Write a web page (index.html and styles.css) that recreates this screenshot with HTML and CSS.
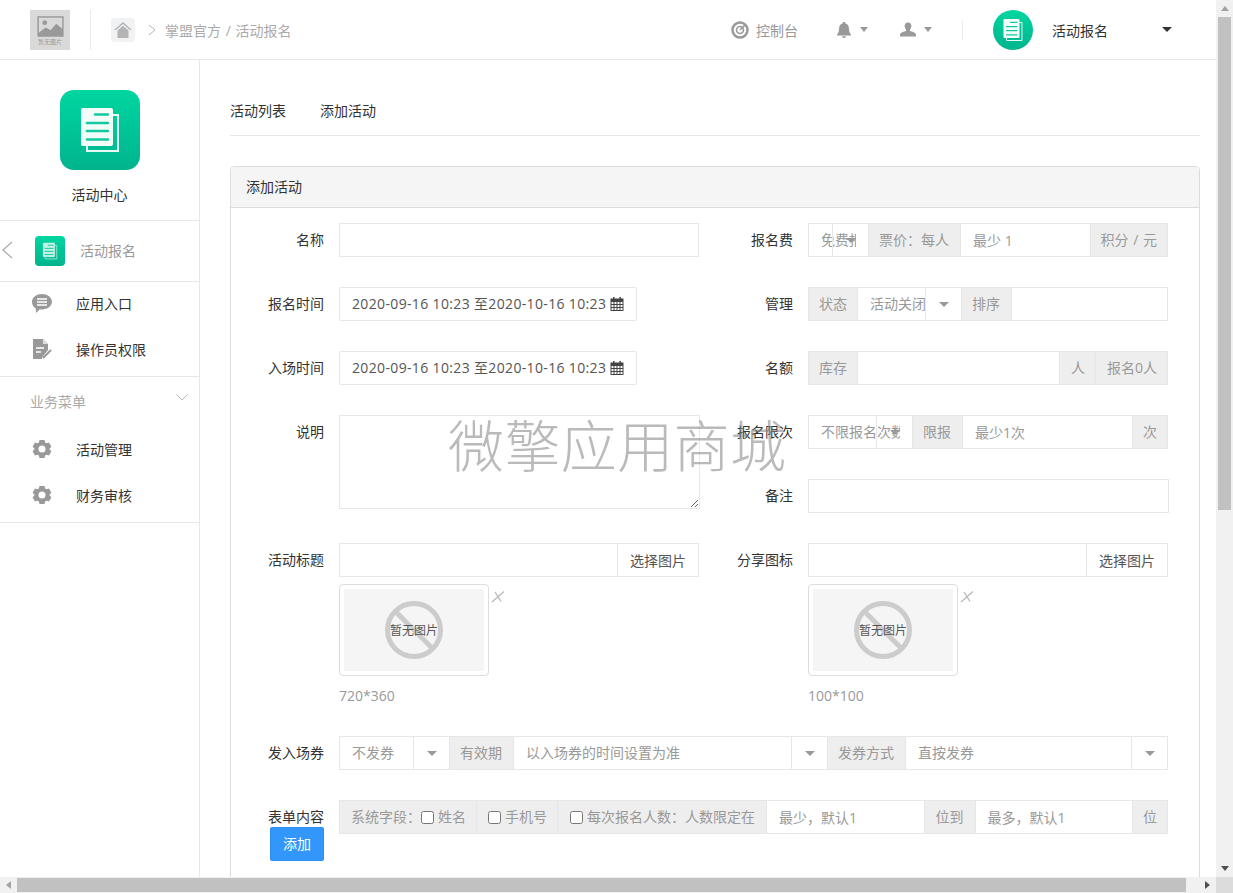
FILE: index.html
```html
<!DOCTYPE html>
<html lang="zh-CN">
<head>
  <meta charset="UTF-8">
  <title>添加活动</title>
  <link rel="stylesheet" href="styles.css">
</head>
<body>
  <svg class="sprites" width="0" height="0">
    <defs>
      <symbol id="docIcon" viewBox="0 0 80 80">
        <path d="M27 25h31v36H27z" fill="none" stroke="#e6faf5" stroke-width="2"/>
        <rect x="21" y="18" width="32" height="38" rx="2" fill="#f2fdfa"/>
        <path d="M35 24.500h13M27 33h21M27 41h21M27 49.500h21" stroke="#12c9a0" stroke-width="2.500" stroke-linecap="round"/>
      </symbol>
      <symbol id="gearIcon" viewBox="0 0 20 20">
        <path fill="#999" fill-rule="evenodd" d="M7.500 1h5l.6 2.400 1.500.8 2.400-.8 2.400 4.300-1.800 1.700v1.200l1.800 1.700-2.400 4.300-2.400-.8-1.500.8-.6 2.400h-5l-.6-2.400-1.500-.8-2.400.8L.6 12.300l1.800-1.700V9.400L.6 7.700 3 3.400l2.400.8 1.500-.8zM10 6.500a3.500 3.500 0 1 0 0 7 3.500 3.500 0 0 0 0-7z"/>
      </symbol>
      <symbol id="noImage" viewBox="0 0 60 60">
        <circle cx="30" cy="30" r="26.500" fill="none" stroke="#ccc" stroke-width="5"/>
        <path d="M11 11l38 38" stroke="#ccc" stroke-width="5"/>
      </symbol>
      <symbol id="closeIcon" viewBox="0 0 14 14">
        <path d="M1 12L13 1.500M4 2l6 9.500" fill="none" stroke="#bbb" stroke-width="1.400"/>
      </symbol>
      <symbol id="calendarIcon" viewBox="0 0 14 14">
        <path fill="#444" fill-rule="evenodd" d="M3 0h1.500v1.500h5V0H11v1.500h2.500V14H.5V1.500H3zM1.500 5v2h2V5zm3 0v2h2V5zm3 0v2h2V5zm3 0v2h2V5zm-9 3v2h2V8zm3 0v2h2V8zm3 0v2h2V8zm3 0v2h2V8zm-9 3v2h2v-2zm3 0v2h2v-2zm3 0v2h2v-2zm3 0v2h2v-2z"/>
      </symbol>
    </defs>
  </svg>

  <div class="app">
    <div class="page">
      <!-- Top bar -->
      <header class="top-bar">
        <div class="logo-holder">
          <svg class="logo-image" viewBox="0 0 28 22">
            <rect x="1" y="1" width="26" height="20" fill="none" stroke="#999" stroke-width="1.500"/>
            <circle cx="8" cy="7" r="2.500" fill="#999"/>
            <path d="M1 18l8-6 5 3 6-7 7 6v7H1z" fill="#999"/>
          </svg>
          <span class="logo-text">暂无图片</span>
        </div>
        <span class="top-divider"></span>
        <span class="home-btn">
          <svg viewBox="0 0 18 16" width="18" height="16">
            <path d="M9 0L0 8h2l7-6 7 6h2z" fill="#b4b4b4"/>
            <path d="M3.500 8.500L9 3.700l5.500 4.800V16h-11z" fill="#b4b4b4"/>
          </svg>
        </span>
        <svg class="crumb-arrow" viewBox="0 0 8 12" width="8" height="12"><path d="M1 1l6 5-6 5" fill="none" stroke="#b5b5b5"/></svg>
        <span class="crumb">掌盟官方 / 活动报名</span>

        <div class="top-right">
          <svg class="console-icon" viewBox="0 0 18 18" width="18" height="18">
            <circle cx="9" cy="9" r="7.500" fill="none" stroke="#999" stroke-width="2.500"/>
            <circle cx="9" cy="9" r="3.500" fill="none" stroke="#999" stroke-width="1.600"/>
            <path d="M9 9l5-5" stroke="#999" stroke-width="1.600"/>
          </svg>
          <span class="console-text">控制台</span>
          <svg class="bell-icon" viewBox="0 0 14 16" width="14" height="16">
            <path d="M7 0c1 0 1.500.6 1.500 1.400C11 2 12 4 12 7c0 3 1 4.500 2 5.500v1H0v-1C1 11.500 2 10 2 7c0-3 1-5 3.500-5.600C5.500.6 6 0 7 0z" fill="#999"/>
            <path d="M5 14.300h4C9 15.300 8 16 7 16s-2-.7-2-1.700z" fill="#999"/>
          </svg>
          <span class="caret caret-bell"></span>
          <svg class="user-icon" viewBox="0 0 18 16" width="16" height="15">
            <path d="M9 0c2.500 0 3.800 1.800 3.800 4.200 0 1.700-.7 3.100-1.600 4v1.500c2 .8 6.800 1.500 6.800 4.300v2H0v-2c0-2.800 4.800-3.500 6.800-4.300V8.200c-.9-.9-1.600-2.300-1.600-4C5.200 1.800 6.500 0 9 0z" fill="#999"/>
          </svg>
          <span class="caret caret-user"></span>
          <span class="top-divider top-divider-right"></span>
          <span class="app-avatar"><svg class="doc-svg"><use href="#docIcon"/></svg></span>
          <span class="app-name">活动报名</span>
          <span class="caret caret-dark"></span>
        </div>
      </header>

      <div class="layout">
        <!-- Sidebar -->
        <aside class="sidebar">
          <div class="side-head">
            <span class="side-logo"><svg class="doc-svg"><use href="#docIcon"/></svg></span>
            <div class="side-title">活动中心</div>
          </div>
          <div class="side-back">
            <svg class="back-arrow" viewBox="0 0 12 18" width="12" height="18"><path d="M11 1L2 9l9 8" fill="none" stroke="#aaa" stroke-width="1.200"/></svg>
            <span class="side-app-icon"><svg class="doc-svg doc-faded"><use href="#docIcon"/></svg></span>
            <span class="side-app-name">活动报名</span>
          </div>
          <ul class="side-group side-group-app">
            <li class="side-item">
              <svg class="side-icon" viewBox="0 0 20 20">
                <path d="M10 1c5.500 0 10 3.400 10 7.800s-4.500 7.700-10 7.700c-.8 0-1.500 0-2.200-.2L4 20l-.2-4.400C1.400 14.200 0 11.700 0 8.800 0 4.400 4.500 1 10 1z" fill="#999"/>
                <path d="M5 6h10M5 9h10M5 12h10" stroke="#fff" stroke-width="1.400"/>
              </svg>
              应用入口
            </li>
            <li class="side-item">
              <svg class="side-icon" viewBox="0 0 20 20">
                <path d="M1 0h10l5 5v6l-6 7.500V20H1z" fill="#999"/>
                <path d="M11 0v5h5z" fill="#ddd"/>
                <path d="M4 9h8M4 13h5" stroke="#fff" stroke-width="1.500"/>
                <path d="M11 19l8-8" stroke="#999" stroke-width="2"/>
              </svg>
              操作员权限
            </li>
          </ul>
          <ul class="side-group side-group-biz">
            <li class="side-label">
              业务菜单
              <svg viewBox="0 0 12 7" width="12" height="7"><path d="M.5.500L6 6 11.500.500" fill="none" stroke="#b8b8b8"/></svg>
            </li>
            <li class="side-item"><svg class="side-icon"><use href="#gearIcon"/></svg>活动管理</li>
            <li class="side-item"><svg class="side-icon"><use href="#gearIcon"/></svg>财务审核</li>
          </ul>
        </aside>

        <!-- Main -->
        <main class="content">
          <nav class="tabs">
            <a class="tab">活动列表</a>
            <a class="tab">添加活动</a>
          </nav>

          <section class="panel">
            <div class="panel-head">添加活动</div>
            <div class="panel-body">
              <div class="form-cols">
                <div class="form-col">
                  <div class="field">
                    <label class="field-label">名称</label>
                    <div class="field-control"><input class="input" type="text"></div>
                  </div>
                  <div class="field">
                    <label class="field-label">报名时间</label>
                    <div class="field-control">
                      <div class="date-range"><span class="date-text">2020-09-16 10:23 至2020-10-16 10:23</span><svg class="cal-icon"><use href="#calendarIcon"/></svg></div>
                    </div>
                  </div>
                  <div class="field">
                    <label class="field-label">入场时间</label>
                    <div class="field-control">
                      <div class="date-range"><span class="date-text">2020-09-16 10:23 至2020-10-16 10:23</span><svg class="cal-icon"><use href="#calendarIcon"/></svg></div>
                    </div>
                  </div>
                  <div class="field field-tall">
                    <label class="field-label">说明</label>
                    <div class="field-control"><textarea class="textarea"></textarea></div>
                  </div>
                  <div class="field field-image">
                    <label class="field-label">活动标题</label>
                    <div class="field-control">
                      <div class="group">
                        <input class="input" type="text">
                        <button class="pick-btn">选择图片</button>
                      </div>
                      <div class="preview-row">
                        <div class="preview"><div class="preview-inner"><svg class="no-image"><use href="#noImage"/></svg><span class="no-image-text">暂无图片</span></div></div>
                        <svg class="preview-close"><use href="#closeIcon"/></svg>
                      </div>
                      <div class="hint">720*360</div>
                    </div>
                  </div>
                </div>

                <div class="form-col">
                  <div class="field">
                    <label class="field-label">报名费</label>
                    <div class="field-control group">
                      <div class="select w-60"><span class="select-text">免费报名</span><span class="select-arrow"><span class="caret"></span></span></div>
                      <span class="addon">票价：每人</span>
                      <input class="input" type="text" placeholder="最少 1">
                      <span class="addon">积分 / 元</span>
                    </div>
                  </div>
                  <div class="field">
                    <label class="field-label">管理</label>
                    <div class="field-control group">
                      <span class="addon">状态</span>
                      <div class="select w-104"><span class="select-text">活动关闭</span><span class="select-arrow"><span class="caret"></span></span></div>
                      <span class="addon">排序</span>
                      <input class="input" type="text">
                    </div>
                  </div>
                  <div class="field">
                    <label class="field-label">名额</label>
                    <div class="field-control group">
                      <span class="addon">库存</span>
                      <input class="input" type="text">
                      <span class="addon addon-pad">人</span>
                      <span class="addon addon-pad">报名0人</span>
                    </div>
                  </div>
                  <div class="field">
                    <label class="field-label">报名限次</label>
                    <div class="field-control group">
                      <div class="select w-104"><span class="select-text">不限报名次数</span><span class="select-arrow"><span class="caret"></span></span></div>
                      <span class="addon">限报</span>
                      <input class="input" type="text" placeholder="最少1次">
                      <span class="addon">次</span>
                    </div>
                  </div>
                  <div class="field">
                    <label class="field-label">备注</label>
                    <div class="field-control field-control-wide"><input class="input" type="text"></div>
                  </div>
                  <div class="field field-image">
                    <label class="field-label">分享图标</label>
                    <div class="field-control">
                      <div class="group">
                        <input class="input" type="text">
                        <button class="pick-btn">选择图片</button>
                      </div>
                      <div class="preview-row">
                        <div class="preview"><div class="preview-inner"><svg class="no-image"><use href="#noImage"/></svg><span class="no-image-text">暂无图片</span></div></div>
                        <svg class="preview-close"><use href="#closeIcon"/></svg>
                      </div>
                      <div class="hint">100*100</div>
                    </div>
                  </div>
                </div>
              </div>

              <div class="field">
                <label class="field-label">发入场券</label>
                <div class="field-full group">
                  <div class="select w-110"><span class="select-text">不发券</span><span class="select-arrow"><span class="caret"></span></span></div>
                  <span class="addon">有效期</span>
                  <div class="select w-315"><span class="select-text">以入场券的时间设置为准</span><span class="select-arrow"><span class="caret"></span></span></div>
                  <span class="addon">发券方式</span>
                  <div class="select select-grow"><span class="select-text">直按发券</span><span class="select-arrow"><span class="caret"></span></span></div>
                </div>
              </div>

              <div class="field">
                <div class="field-label field-label-stack">
                  <span>表单内容</span>
                  <button class="add-btn">添加</button>
                </div>
                <div class="field-full group">
                  <span class="addon addon-pad">系统字段：<input class="check" type="checkbox">姓名</span>
                  <span class="addon addon-pad"><input class="check" type="checkbox">手机号</span>
                  <span class="addon addon-limit"><input class="check" type="checkbox">每次报名人数：人数限定在</span>
                  <input class="input" type="text" placeholder="最少，默认1">
                  <span class="addon addon-to">位到</span>
                  <input class="input" type="text" placeholder="最多，默认1">
                  <span class="addon">位</span>
                </div>
              </div>
            </div>
          </section>
        </main>
      </div>
    </div>

    <!-- Window scrollbars -->
    <div class="v-scroll">
      <span class="sb-arrow sb-up"></span>
      <span class="sb-thumb-v"></span>
      <span class="sb-arrow sb-down"></span>
    </div>
    <div class="h-scroll">
      <span class="sb-arrow sb-left"></span>
      <span class="sb-thumb-h"></span>
      <span class="sb-arrow sb-right"></span>
    </div>
    <div class="sb-corner"></div>

    <div class="watermark">微擎应用商城</div>
  </div>
</body>
</html>
```

FILE: styles.css
```css
* {
  box-sizing: border-box;
}
html, body {
  margin: 0;
  padding: 0;
  height: 100%;
  overflow: hidden;
}
body {
  font-family: "Open Sans", "Noto Sans CJK SC", sans-serif;
  font-size: 14px;
  color: #333;
  background-color: #fff;
}
.sprites {
  position: absolute;
}
.app {
  position: relative;
  width: 1233px;
  height: 893px;
  display: grid;
  grid-template-columns: 1216px 17px;
  grid-template-rows: 877px 16px;
}
.page {
  overflow: hidden;
}

/* Top bar */
.top-bar {
  height: 60px;
  padding: 0 44px 0 30px;
  display: flex;
  align-items: center;
  border-bottom: 1px solid #e7e7e7;
}
.logo-holder {
  width: 40px;
  height: 40px;
  background-color: #d9d9d9;
  display: flex;
  flex-direction: column;
  align-items: center;
  padding-top: 6px;
}
.logo-image {
  width: 27px;
  height: 21px;
}
.logo-text {
  font-size: 6px;
  line-height: 10px;
  color: #999;
}
.top-divider {
  width: 1px;
  height: 40px;
  margin-left: 20px;
  background-color: #ececec;
}
.home-btn {
  width: 24px;
  height: 24px;
  margin-left: 20px;
  border-radius: 3px;
  background-color: #f0f2f4;
  display: flex;
  align-items: center;
  justify-content: center;
}
.crumb-arrow {
  margin-left: 13px;
}
.crumb {
  margin-left: 9px;
  color: #aaa;
  word-spacing: 1px;
}
.top-right {
  margin-left: auto;
  display: flex;
  align-items: center;
}
.console-text {
  margin-left: 7px;
  color: #999;
}
.bell-icon {
  margin-left: 39px;
}
.caret {
  display: inline-block;
  width: 0;
  height: 0;
  border-style: solid;
  border-width: 5px 4px 0;
  border-color: #999 transparent transparent;
}
.caret-bell {
  margin-left: 9px;
}
.user-icon {
  margin-left: 32px;
}
.caret-user {
  margin-left: 8px;
}
.top-divider-right {
  height: 20px;
  margin-left: 30px;
}
.app-avatar {
  width: 40px;
  height: 40px;
  margin-left: 30px;
  border-radius: 50%;
  background: linear-gradient(#00d6a0, #00b48e);
  overflow: hidden;
}
.doc-svg {
  display: block;
  width: 100%;
  height: 100%;
}
.doc-faded {
  opacity: 0.8;
}
.app-name {
  margin-left: 19px;
  width: 110px;
}
.caret-dark {
  border-width: 5px 5px 0;
  border-color: #333 transparent transparent;
}

/* Sidebar */
.layout {
  display: flex;
  height: 817px;
}
.sidebar {
  width: 200px;
  flex-shrink: 0;
  border-right: 1px solid #e7e7e7;
}
.side-head {
  height: 161px;
  padding-top: 30px;
  border-bottom: 1px solid #e7e7e7;
  text-align: center;
}
.side-logo {
  display: block;
  width: 80px;
  height: 80px;
  margin: 0 auto;
  border-radius: 14px;
  background: linear-gradient(#00d6a0, #00b48e);
}
.side-title {
  margin-top: 15px;
  line-height: 20px;
}
.side-back {
  height: 61px;
  padding-left: 1px;
  display: flex;
  align-items: center;
  border-bottom: 1px solid #e7e7e7;
}
.back-arrow {
  margin-bottom: 2px;
}
.side-app-icon {
  width: 30px;
  height: 30px;
  margin-left: 22px;
  border-radius: 4px;
  background: linear-gradient(#00d6a0, #00b48e);
}
.side-app-name {
  margin: 0 0 2px 15px;
  color: #999;
}
.side-group {
  padding: 0 0 4px;
  list-style: none;
  border-bottom: 1px solid #e7e7e7;
}
.side-group-app {
  margin: -2px 0 0;
}
.side-group-biz {
  margin: -1px 0 0;
}
.side-item {
  height: 46px;
  padding-left: 32px;
  display: flex;
  align-items: center;
}
.side-icon {
  width: 20px;
  height: 20px;
  margin-right: 24px;
}
.side-label {
  height: 50px;
  padding: 0 11px 0 30px;
  display: flex;
  align-items: center;
  justify-content: space-between;
  color: #aaa;
}
.side-label svg {
  margin-bottom: 8px;
}

/* Main */
.content {
  flex: 1;
  min-width: 0;
  padding: 30px 16px 0 30px;
}
.tabs {
  height: 46px;
  padding-bottom: 6px;
  display: flex;
  gap: 34px;
  align-items: center;
  border-bottom: 1px solid #e7e7e7;
}
.tab {
  color: #333;
}
.panel {
  margin-top: 30px;
  border: 1px solid #ddd;
  border-radius: 4px 4px 0 0;
}
.panel-head {
  height: 41px;
  padding-left: 15px;
  line-height: 40px;
  background-color: #f5f5f5;
  border-bottom: 1px solid #ddd;
  border-radius: 3px 3px 0 0;
}
.panel-body {
  padding-top: 15px;
}
.form-cols {
  display: grid;
  grid-template-columns: 469px 469px;
}
.field {
  display: flex;
  margin-bottom: 30px;
}
.field-tall {
  margin-bottom: 34px;
}
.field-label {
  width: 93px;
  flex-shrink: 0;
  margin-right: 15px;
  text-align: right;
  line-height: 34px;
}
.field-control {
  width: 360px;
}
.field-control-wide {
  width: 361px;
}
.field-full {
  width: 829px;
}
.field-label-stack {
  display: flex;
  flex-direction: column;
  align-items: flex-end;
  padding-top: 7px;
  line-height: 20px;
}
.add-btn {
  width: 54px;
  height: 34px;
  border: 1px solid #2d8fef;
  border-radius: 2px;
  background-color: #3296fa;
  color: #fff;
  font: inherit;
}
.input, .textarea {
  display: block;
  width: 100%;
  min-width: 0;
  height: 34px;
  padding: 0 12px;
  border: 1px solid #e7e7e7;
  border-radius: 0;
  outline: none;
  font: inherit;
  color: #555;
  background-color: #fff;
}
.input::placeholder {
  color: #999;
}
.textarea {
  height: 94px;
  width: 361px;
  padding: 6px 12px;
}
.date-range {
  width: 298px;
  height: 34px;
  padding: 0 12px;
  display: flex;
  align-items: center;
  border: 1px solid #e7e7e7;
  border-radius: 2px;
  color: #555;
  white-space: nowrap;
}
.date-text {
  margin-bottom: 2px;
  letter-spacing: 0.350px;
}
.cal-icon {
  width: 14px;
  height: 14px;
  margin-left: 4px;
  flex-shrink: 0;
}

/* Input groups */
.group {
  display: flex;
  height: 34px;
}
.group > * + * {
  margin-left: -1px;
}
.group .input {
  flex: 1;
}
.addon {
  flex-shrink: 0;
  padding: 0 10px 2px;
  display: flex;
  align-items: center;
  white-space: nowrap;
  word-spacing: 1px;
  border: 1px solid #e7e7e7;
  background-color: #eee;
  color: #999;
}
.select + .addon {
  padding-right: 11px;
}
.addon-pad {
  padding-left: 11px;
}
.addon-limit {
  padding-left: 12px;
  padding-right: 11px;
}
.addon-to {
  padding-left: 11px;
  padding-right: 11px;
}
.select {
  position: relative;
  flex-shrink: 0;
  height: 34px;
  padding: 0 12px;
  line-height: 32px;
  border: 1px solid #e7e7e7;
  background-color: #fff;
  color: #999;
}
.select-text {
  display: block;
  white-space: nowrap;
  overflow: hidden;
}
.select-arrow {
  position: absolute;
  top: 0;
  right: 0;
  bottom: 0;
  width: 36px;
  display: flex;
  align-items: center;
  justify-content: center;
  border-left: 1px solid #e7e7e7;
}
.select-arrow .caret {
  border-width: 5px 5px 0;
}
.w-60 { width: 61px; }
.w-104 { width: 105px; }
.w-110 { width: 111px; }
.w-315 { width: 315px; }
.select-grow { flex: 1; }
.check {
  width: 13px;
  height: 13px;
  margin: 2px 4px 0 0;
}
.pick-btn {
  flex-shrink: 0;
  width: 82px;
  height: 34px;
  padding: 0;
  border: 1px solid #e7e7e7;
  background-color: #fff;
  color: #555;
  font: inherit;
}

/* Image preview */
.preview-row {
  display: flex;
  margin-top: 7px;
}
.preview {
  width: 150px;
  height: 92px;
  padding: 4px;
  border: 1px solid #ddd;
  border-radius: 4px;
}
.preview-inner {
  position: relative;
  height: 100%;
  display: flex;
  align-items: center;
  justify-content: center;
  background-color: #f5f5f5;
}
.no-image {
  width: 60px;
  height: 60px;
}
.no-image-text {
  position: absolute;
  font-size: 12px;
  color: #555;
}
.preview-close {
  width: 14px;
  height: 14px;
  margin: 6px 0 0 2px;
}
.hint {
  margin-top: 10px;
  line-height: 20px;
  color: #999;
}

/* Scrollbars */
.v-scroll {
  display: flex;
  flex-direction: column;
  align-items: center;
  background-color: #f1f1f1;
}
.h-scroll {
  display: flex;
  align-items: center;
  background-color: #f1f1f1;
}
.sb-thumb-v {
  width: 13px;
  height: 493px;
  background-color: #c1c1c1;
}
.sb-thumb-h {
  width: 1169px;
  height: 14px;
  background-color: #c1c1c1;
}
.sb-corner {
  background-color: #dcdcdc;
}
.sb-arrow {
  width: 0;
  height: 0;
  border-style: solid;
  border-color: transparent;
}
.sb-up {
  margin: 6px 0 6px;
  border-width: 0 4px 5px;
  border-bottom-color: #a3a3a3;
}
.sb-down {
  margin-top: auto;
  margin-bottom: 6px;
  border-width: 5px 4px 0;
  border-top-color: #505050;
}
.sb-left {
  margin: 0 6px;
  border-width: 4px 5px 4px 0;
  border-right-color: #a3a3a3;
}
.sb-right {
  margin-left: auto;
  margin-right: 6px;
  border-width: 4px 0 4px 5px;
  border-left-color: #505050;
}

.watermark {
  position: absolute;
  left: 448px;
  top: 403px;
  font-family: "Noto Sans CJK SC", sans-serif;
  font-size: 56px;
  font-weight: 300;
  line-height: 80px;
  letter-spacing: 0.400px;
  color: rgba(130, 130, 130, 0.55);
  white-space: nowrap;
  pointer-events: none;
}
```
